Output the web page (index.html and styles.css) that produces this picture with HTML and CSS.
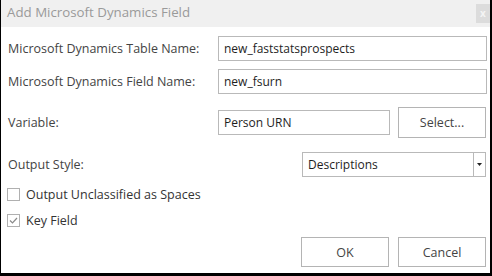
FILE: index.html
```html
<!DOCTYPE html>
<html>
<head>
<meta charset="utf-8">
<link rel="stylesheet" href="styles.css">
</head>
<body>
<div class="dialog">
  <div class="titlebar">
    <span class="title">Add Microsoft Dynamics Field</span>
    <span class="close">x</span>
  </div>
  <div class="content">
    <div class="row row-first">
      <span class="label">Microsoft Dynamics Table Name:</span>
      <div class="input wide">new_faststatsprospects</div>
    </div>
    <div class="row row-second">
      <span class="label">Microsoft Dynamics Field Name:</span>
      <div class="input wide">new_fsurn</div>
    </div>
    <div class="row row-var">
      <span class="label">Variable:</span>
      <div class="input narrow">Person URN</div>
      <div class="button select">Select...</div>
    </div>
    <div class="row row-style">
      <span class="label">Output Style:</span>
      <div class="dropdown">
        <span class="dd-text">Descriptions</span>
        <span class="dd-arrow"><svg width="5" height="3" viewBox="0 0 5 3"><path d="M0 0H5L2.5 3Z" fill="#222"/></svg></span>
      </div>
    </div>
    <div class="check check-first">
      <span class="box"></span>
      <span class="check-label">Output Unclassified as Spaces</span>
    </div>
    <div class="check check-second">
      <span class="box"><svg width="11" height="11" viewBox="0 0 11 11"><path d="M2 5.5L4.5 8L9 3" fill="none" stroke="#8a8a8a" stroke-width="1.2"/></svg></span>
      <span class="check-label">Key Field</span>
    </div>
    <div class="actions">
      <div class="button">OK</div>
      <div class="button">Cancel</div>
    </div>
  </div>
</div>
</body>
</html>
```

FILE: styles.css
```css
* { box-sizing: border-box; }
html, body { margin: 0; padding: 0; background: #fff; }
body {
  font-family: "Open Sans", "Noto Sans", sans-serif;
  font-size: 12px;
  color: #3a3a3a;
}
.dialog {
  width: 492px;
  height: 276px;
  border-left: 1px solid #000;
  border-right: 2px solid #000;
  border-bottom: 3px solid #000;
  display: flex;
  flex-direction: column;
}
.titlebar {
  height: 27px;
  background: #f0f0f0;
  display: flex;
  align-items: flex-start;
  justify-content: space-between;
  padding-left: 6px;
}
.title {
  color: #9a9a9a;
  font-size: 13.3px;
  line-height: 25px;
}
.close {
  width: 14px;
  height: 19px;
  margin-top: 4px;
  background: #dcdcdc;
  color: #f4f4f4;
  font-size: 10px;
  line-height: 18px;
  text-align: center;
  font-weight: bold;
}
.content {
  flex: 1;
  padding: 9px 3px 0 7px;
  display: flex;
  flex-direction: column;
}
.row {
  display: flex;
  align-items: center;
}
.label {
  flex: 1;
  color: #444;
  font-size: 12.5px;
}
.input {
  height: 25px;
  border: 1px solid #b9b9b9;
  padding: 0 5px;
  line-height: 23px;
  color: #1e1e1e;
  background: #fff;
}
.wide { width: 269px; }
.narrow { width: 172px; margin-right: 8px; }
.row-second { margin-top: 8px; }
.row-var { margin-top: 13px; }
.row-style { margin-top: 14px; }
.button {
  width: 88px;
  height: 31px;
  border: 1px solid #b4b4b4;
  background: #fff;
  text-align: center;
  line-height: 29px;
  color: #444;
  font-size: 12.5px;
}
.select { margin-right: 1px; }
.dropdown {
  width: 184px;
  height: 25px;
  border: 1px solid #b9b9b9;
  margin-right: 1px;
  display: flex;
}
.dd-text {
  flex: 1;
  padding-left: 5px;
  line-height: 23px;
  color: #1e1e1e;
}
.dd-arrow {
  width: 12px;
  border-left: 1px solid #b9b9b9;
  display: flex;
  align-items: center;
  justify-content: center;
}
.dd-arrow svg { display: block; }
.check {
  display: flex;
  align-items: center;
  margin-left: -1px;
  height: 13px;
}
.check-first { margin-top: 11px; }
.check-second { margin-top: 13px; }
.box {
  width: 13px;
  height: 13px;
  border: 1px solid #b0b0b0;
  background: #fff;
  display: flex;
  align-items: center;
  justify-content: center;
}
.box svg { display: block; }
.check-label {
  margin-left: 6px;
  color: #333;
  font-size: 12.5px;
  line-height: 13px;
}
.actions {
  margin-top: 10px;
  display: flex;
  justify-content: flex-end;
  gap: 9px;
  padding-right: 1px;
}
.actions .button { height: 30px; }
```
